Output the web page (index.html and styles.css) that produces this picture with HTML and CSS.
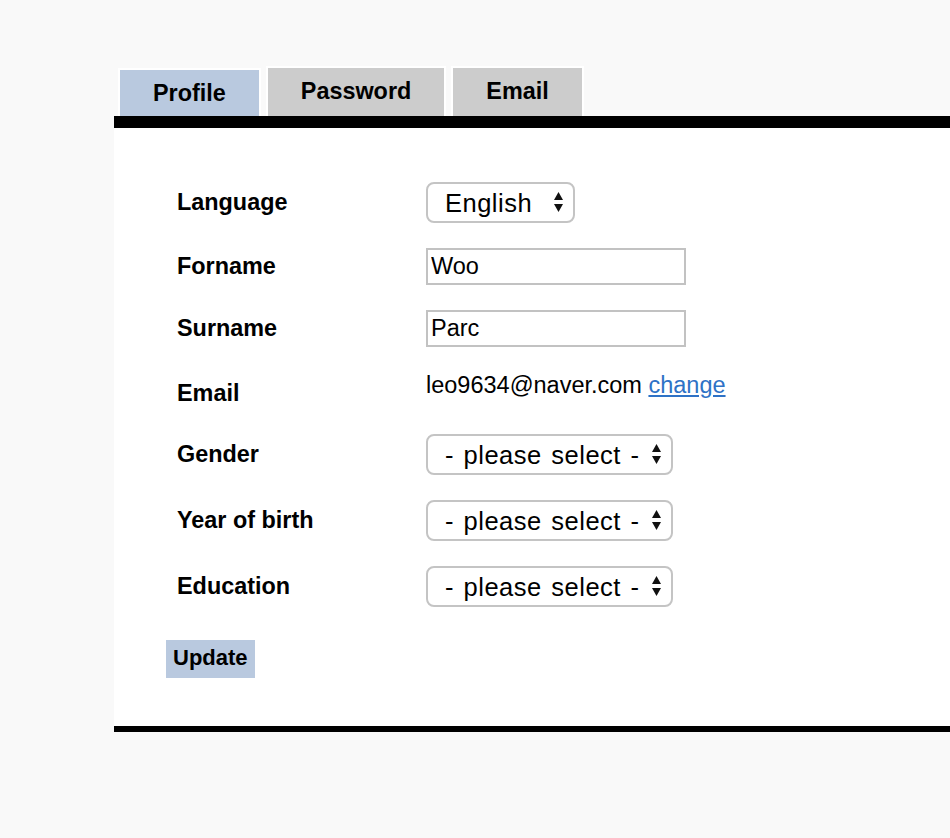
FILE: index.html
```html
<!DOCTYPE html>
<html lang="en">
<head>
<meta charset="utf-8">
<title>Profile settings</title>
<link rel="stylesheet" href="styles.css">
</head>
<body>
<div class="page">
  <nav class="tabs">
    <a class="tab tab-active" href="#">Profile</a>
    <a class="tab" href="#">Password</a>
    <a class="tab" href="#">Email</a>
  </nav>
  <section class="panel">
    <form class="profile-form">
      <div class="fields">
        <label class="field-label">Language</label>
        <div class="select-wrap narrow">
          <select class="select"><option>English</option></select>
          <svg class="select-arrows" viewBox="0 0 9 20"><polygon points="0,8 9,8 4.5,0"/><polygon points="0,12 9,12 4.5,20"/></svg>
        </div>

        <label class="field-label">Forname</label>
        <input class="text-input" type="text" value="Woo">

        <label class="field-label">Surname</label>
        <input class="text-input" type="text" value="Parc">

        <label class="field-label email-label">Email</label>
        <div class="email-value">leo9634@naver.com <a class="link" href="#">change</a></div>

        <label class="field-label">Gender</label>
        <div class="select-wrap">
          <select class="select"><option>- please select -</option></select>
          <svg class="select-arrows" viewBox="0 0 9 20"><polygon points="0,8 9,8 4.5,0"/><polygon points="0,12 9,12 4.5,20"/></svg>
        </div>

        <label class="field-label">Year of birth</label>
        <div class="select-wrap">
          <select class="select"><option>- please select -</option></select>
          <svg class="select-arrows" viewBox="0 0 9 20"><polygon points="0,8 9,8 4.5,0"/><polygon points="0,12 9,12 4.5,20"/></svg>
        </div>

        <label class="field-label">Education</label>
        <div class="select-wrap">
          <select class="select"><option>- please select -</option></select>
          <svg class="select-arrows" viewBox="0 0 9 20"><polygon points="0,8 9,8 4.5,0"/><polygon points="0,12 9,12 4.5,20"/></svg>
        </div>
      </div>
      <button class="update-btn" type="button">Update</button>
    </form>
  </section>
</div>
</body>
</html>
```
FILE: styles.css
```css
html, body {
  margin: 0;
  padding: 0;
  background: #f9f9f9;
}

body {
  font-family: "Liberation Sans", Arial, sans-serif;
  color: #000;
  overflow: hidden;
}

.page {
  padding-top: 66px;
  padding-left: 114px;
}

.tabs {
  display: flex;
  align-items: flex-end;
  gap: 5px;
  padding-left: 4px;
}

.tab {
  box-sizing: border-box;
  display: block;
  height: 50px;
  padding: 10px 33px 0;
  border: 2px solid #fff;
  border-bottom: 0;
  background: #cccccc;
  color: #000;
  text-decoration: none;
  font-weight: bold;
  font-size: 23.4px;
  line-height: 27px;
}

.tab-active {
  height: 48px;
  background: #b9c9df;
}

.panel {
  background: #fff;
  border-top: 12px solid #000;
  border-bottom: 6px solid #000;
  padding: 54px 0 48px 52px;
}

.fields {
  display: grid;
  grid-template-columns: 249px auto;
  row-gap: 25px;
  margin-left: 11px;
  align-items: center;
  justify-items: start;
}

.field-label {
  font-weight: bold;
  font-size: 23.4px;
  line-height: 27px;
}

.email-label {
  align-self: start;
  margin-top: 8px;
}

.email-value {
  align-self: start;
  height: 37px;
  font-size: 23.5px;
  line-height: 27px;
}

.link {
  color: #2e72c6;
  text-decoration: underline;
}

.text-input {
  box-sizing: border-box;
  width: 260px;
  height: 37px;
  margin: 0;
  border: 2px solid #c2c2c2;
  border-radius: 0;
  padding: 0 3px;
  font-family: "Liberation Sans", Arial, sans-serif;
  font-size: 23.5px;
  color: #000;
  background: #fff;
  outline: none;
}

.select-wrap {
  position: relative;
  width: 247px;
}

.select-wrap.narrow {
  width: 149px;
}

.select {
  appearance: none;
  -webkit-appearance: none;
  box-sizing: border-box;
  display: block;
  width: 100%;
  height: 41px;
  margin: 0;
  border: 2px solid #c4c4c4;
  border-radius: 8px;
  background: #fff;
  padding: 0 26px 0 17px;
  font-family: "Liberation Sans", Arial, sans-serif;
  font-size: 25.5px;
  letter-spacing: 0.5px;
  word-spacing: 2px;
  color: #000;
  outline: none;
}

.select-arrows {
  position: absolute;
  right: 12px;
  top: 10px;
  width: 9px;
  height: 20px;
  fill: #111;
  pointer-events: none;
}

.update-btn {
  display: block;
  margin-top: 33px;
  height: 38px;
  padding: 0 7px 2px;
  border: 0;
  background: #b9c9df;
  font-family: "Liberation Sans", Arial, sans-serif;
  font-weight: bold;
  font-size: 22px;
  color: #000;
}
```
